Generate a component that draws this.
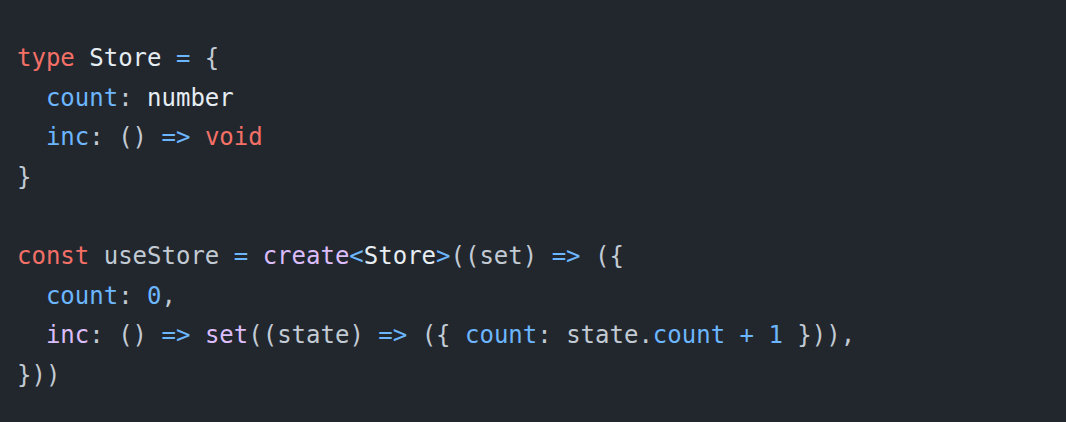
const kw = 'text-[#f47067]';
const op = 'text-[#6cb6ff]';
const fn = 'text-[#dcbdfb]';
const ty = 'text-[#e6edf3]';

type Tok = [string, string?];

const lines: Tok[][] = [
  [['type', kw], [' '], ['Store', ty], [' '], ['=', op], [' {']],
  [['  '], ['count', op], [': '], ['number', ty]],
  [['  '], ['inc', op], [': () '], ['=>', op], [' '], ['void', kw]],
  [['}']],
  [],
  [
    ['const', kw], [' useStore '], ['=', op], [' '], ['create', fn], ['<', op], ['Store', ty], ['>', op],
    ['((set) '], ['=>', op], [' ({'],
  ],
  [['  '], ['count', op], [': '], ['0', op], [',']],
  [
    ['  '], ['inc', fn], [': () '], ['=>', op], [' '], ['set', fn], ['((state) '], ['=>', op], [' ({ '],
    ['count', op], [': state.'], ['count', op], [' '], ['+', op], [' '], ['1', op], [' })),'],
  ],
  [['}))']],
];

export default function App() {
  return (
    <div className="w-[1066px] h-[422px] bg-[#22272e] overflow-hidden">
      <pre className="pt-[39px] pl-[17px] font-['DejaVu_Sans_Mono',monospace] text-[24px] leading-[39.6px] text-[#c2cbd4]">
        {lines.map((line, i) => (
          <div key={i} className="h-[39.6px] whitespace-pre">
            {line.map(([text, cls], j) => (
              <span key={j} className={cls}>
                {text}
              </span>
            ))}
          </div>
        ))}
      </pre>
    </div>
  );
}
